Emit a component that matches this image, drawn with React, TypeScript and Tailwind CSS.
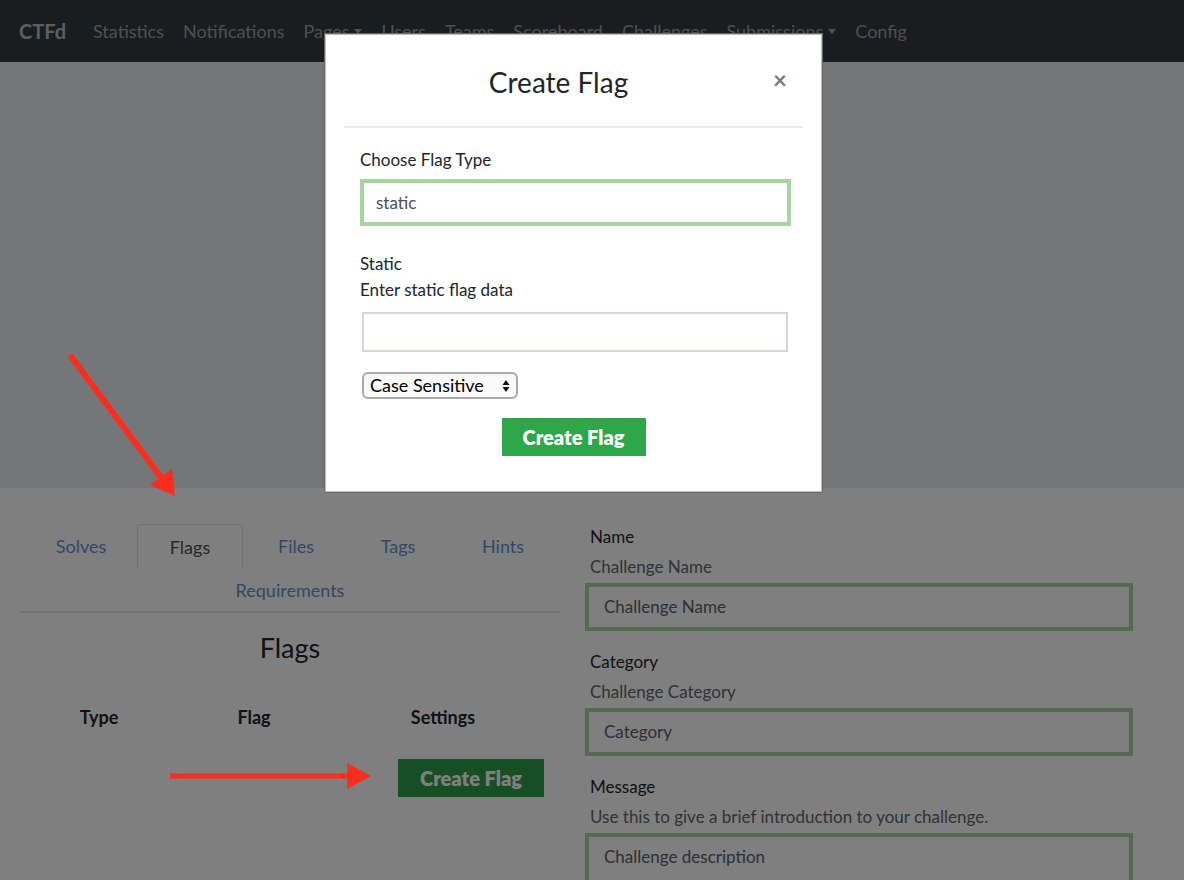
import React from 'react';

const navLinks = ['Statistics', 'Notifications', 'Pages', 'Users', 'Teams', 'Scoreboard', 'Challenges', 'Submissions', 'Config'];
const dropdowns = ['Pages', 'Submissions'];

const tabs = [
  { label: 'Solves', w: 'w-[112px]' },
  { label: 'Flags', w: 'w-[106px]', active: true },
  { label: 'Files', w: 'w-[106px]' },
  { label: 'Tags', w: 'w-[98px]' },
  { label: 'Hints', w: 'w-[112px]' },
];

const Caret = () => (
  <span className="ml-[5px] inline-block h-0 w-0 border-x-[4px] border-t-[5px] border-x-transparent border-t-current align-middle" />
);

const FormGroup: React.FC<{ label: string; help: string; placeholder: string; tall?: boolean }> = ({ label, help, placeholder, tall }) => (
  <div className="mb-[19px]">
    <div className="pl-[5px] text-[17px] leading-[24px] text-[#212529]">{label}</div>
    <div className="mt-[6px] pl-[5px] text-[17px] leading-[24px] text-[#5f666d]">{help}</div>
    <div className={`mt-[4px] flex border-[4px] border-[#a8d5a2] bg-white px-[15px] pt-[7px] ${tall ? 'h-[80px]' : 'h-[48px]'}`}>
      <span className="text-[17px] leading-[26px] text-[#5a6168]">{placeholder}</span>
    </div>
  </div>
);

const App: React.FC = () => {
  return (
    <div className="relative h-[880px] w-[1184px] overflow-hidden bg-white font-['Lato',sans-serif]">
      {/* navbar */}
      <nav className="flex h-[62px] items-center bg-[#343a40] pl-[19px]">
        <span className="mr-[27px] text-[20px] font-bold text-[#b9bbbd]">CTFd</span>
        <div className="flex gap-[19px]">
          {navLinks.map(l => (
            <span key={l} className="flex items-center text-[18px] text-[#9c9fa2]">
              {l}
              {dropdowns.includes(l) && <Caret />}
            </span>
          ))}
        </div>
      </nav>

      {/* jumbotron */}
      <div className="h-[426px] bg-[#e9ecef]" />

      {/* page content */}
      <div className="flex pl-[20px]">
        <div className="w-[540px]">
          <div className="mt-[36px] flex pl-[5px]">
            {tabs.map(t => (
              <div
                key={t.label}
                className={`${t.w} flex h-[45px] shrink-0 items-center justify-center text-[18px] ${t.active ? 'rounded-t-[4px] border border-b-0 border-[#dee2e6] text-[#495057]' : 'text-[#5d93cc]'}`}
              >
                {t.label}
              </div>
            ))}
          </div>
          <div className="flex h-[44px] items-center justify-center border-b-2 border-[#dee2e6] text-[18px] text-[#5d93cc]">
            Requirements
          </div>
          <h2 className="mt-[18px] text-center text-[27px] leading-[34px] text-[#212529]">Flags</h2>
          <div className="mt-[39px] flex text-[18px] font-bold text-[#212529]">
            <div className="w-[158px] text-center">Type</div>
            <div className="w-[152px] text-center">Flag</div>
            <div className="w-[226px] text-center">Settings</div>
          </div>
          <div className="mt-[28px] flex">
            <button className="ml-[378px] h-[38px] w-[146px] bg-[#2a9f46] text-[20px] font-extrabold text-white">Create Flag</button>
          </div>
        </div>

        <div className="ml-[25px] mt-[37px] w-[548px]">
          <FormGroup label="Name" help="Challenge Name" placeholder="Challenge Name" />
          <FormGroup label="Category" help="Challenge Category" placeholder="Category" />
          <FormGroup label="Message" help="Use this to give a brief introduction to your challenge." placeholder="Challenge description" tall />
        </div>
      </div>

      {/* backdrop */}
      <div className="absolute inset-0 bg-black/50" />

      {/* modal */}
      <div className="absolute left-[324px] top-[33px] h-[460px] w-[499px] border border-[#6b6b6b] bg-white outline outline-1 outline-[#bdbdbd] -outline-offset-2">
        <div className="mx-[19px] flex h-[94px] items-center border-b-2 border-[#e9ecef]">
          <h3 className="flex-1 pt-[4px] text-center text-[28px] text-[#212529]">Create Flag</h3>
          <span className="mr-[16px] text-[24px] font-bold leading-none text-[#7a7a7a]">×</span>
        </div>
        <div className="pl-[35px] pt-[20px]">
          <div className="text-[17px] leading-[24px] text-[#212529]">Choose Flag Type</div>
          <div className="mt-[7px] flex h-[47px] w-[431px] items-center border-[4px] border-[#a6d5a2] px-[12px] text-[17px] text-[#495057]">
            static
          </div>
          <div className="mt-[25px] text-[17px] leading-[26px] text-[#212529]">Static</div>
          <div className="text-[17px] leading-[26px] text-[#212529]">Enter static flag data</div>
          <div className="ml-[2px] mt-[9px] h-[40px] w-[426px] border-2 border-[#d3d7db]" />
          <div className="ml-[2px] mt-[20px] flex h-[27px] w-[156px] items-center justify-between rounded-[6px] border-2 border-[#a9a9a9] bg-[#f9f9f9] pl-[6px] pr-[6px] text-[18px] text-black">
            <span>Case Sensitive</span>
            <svg width="8" height="14" viewBox="0 0 8 14">
              <path d="M4 1 L7.5 6 L0.5 6 Z M4 13 L7.5 8 L0.5 8 Z" fill="#111" />
            </svg>
          </div>
          <div className="mt-[19px] flex justify-center pr-[35px]">
            <button className="h-[38px] w-[144px] bg-[#2ea64a] text-[20px] font-extrabold text-white">Create Flag</button>
          </div>
        </div>
      </div>

      {/* annotation arrows */}
      <svg className="pointer-events-none absolute inset-0" width="1184" height="880">
        <line x1="70" y1="355" x2="163" y2="480" stroke="#fc2d1e" strokeWidth="6" />
        <polygon points="175,496 172,469 150,485" fill="#fc2d1e" />
        <line x1="170" y1="776" x2="350" y2="776" stroke="#fc2d1e" strokeWidth="5" />
        <polygon points="347,763 371,776 347,789" fill="#fc2d1e" />
      </svg>
    </div>
  );
};

export default App;
